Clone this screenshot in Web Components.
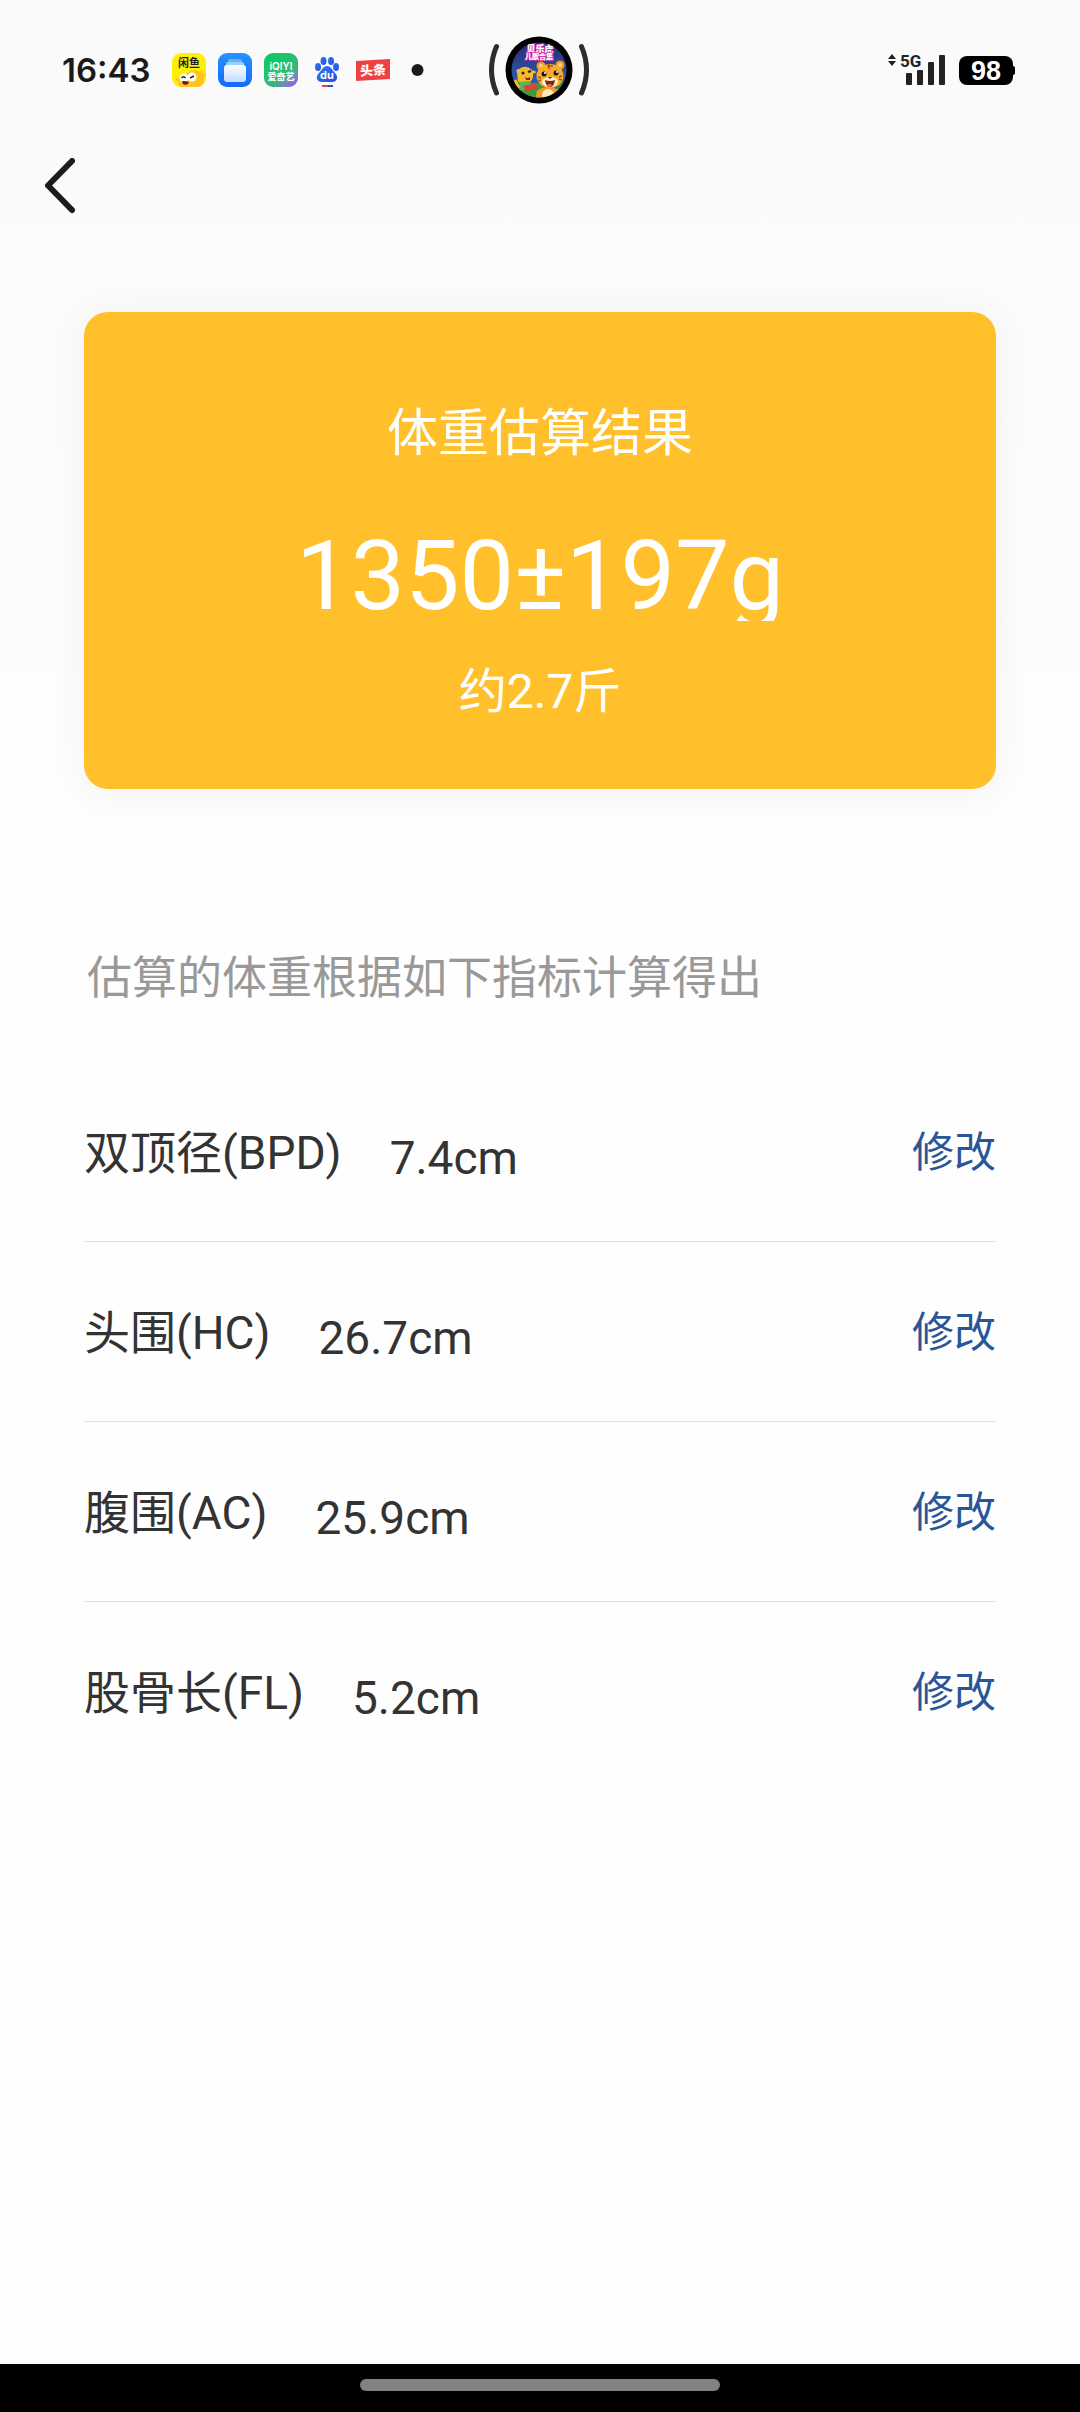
<!DOCTYPE html>
<html lang="zh-CN">
<head>
<meta charset="utf-8">
<meta name="viewport" content="width=device-width, initial-scale=1">
<title>体重估算结果</title>
<style>
  body { margin: 0; background: #fefefe; font-family: Roboto, "Noto Sans CJK SC", sans-serif; color: #333; }
</style>
</head>
<body>
<weight-page></weight-page>

<template id="t-status">
  <style>
    :host { display: grid; grid-template-columns: 1fr auto 1fr; align-items: center; height: 140px; padding: 0 64px 0 62px; color: #1a1a1a; }
    svg { display: block; flex: none; }
    .left, .right { display: flex; align-items: center; }
    .left { gap: 12px; }
    .right { justify-content: flex-end; gap: 14px; }
    time { font: 600 33px/40px Inter, sans-serif; width: 98px; }
  </style>
  <div class="left">
    <time>16:43</time>
    <svg width="34" height="34" viewBox="0 0 34 34">
      <rect width="34" height="34" rx="9" fill="#ffee0a"/>
      <path d="M8 34C4 27 7 20 14 21C18 16 28 16 32 22V27Q32 34 25 34Z" fill="#ffc51c"/>
      <path d="M29 17l2 3M32 21l2 1M4 25l2 3" stroke="#ffc51c" stroke-width="2"/>
      <circle cx="12" cy="25" r="4.500" fill="#fff"/><circle cx="20" cy="24" r="4.500" fill="#fff"/>
      <path d="M9.500 25q2-2.500 4 0M18 25l4-2" stroke="#222" stroke-width="1.500" fill="none"/>
      <path d="M10 28q5 0 7 1q-2 5-6 2z" fill="#5a1712"/><path d="M12 31q2-1 3 0l-2 1z" fill="#f0453a"/>
      <text x="17" y="14" text-anchor="middle" font-family="Noto Sans CJK SC" font-weight="700" font-size="11" fill="#222">闲鱼</text>
    </svg>
    <svg width="34" height="34" viewBox="0 0 34 34">
      <defs><linearGradient id="b" x2="0" y2="1"><stop stop-color="#2493ff"/><stop offset="1" stop-color="#1769f5"/></linearGradient>
      <linearGradient id="c" x2="0" y2="1"><stop stop-color="#fff"/><stop offset="1" stop-color="#bfdcff"/></linearGradient></defs>
      <rect width="34" height="34" rx="9" fill="url(#b)"/>
      <rect x="10" y="6" width="14" height="6" rx="2" fill="#63b1ff"/>
      <rect x="8" y="9" width="18" height="7" rx="2" fill="#9dcfff"/>
      <rect x="6" y="12" width="22" height="17" rx="3" fill="url(#c)"/>
    </svg>
    <svg width="34" height="34" viewBox="0 0 34 34">
      <defs><linearGradient id="q" x1=".2" y1="0" x2="1" y2="1"><stop stop-color="#0ccb62"/><stop offset=".6" stop-color="#35b777"/><stop offset=".8" stop-color="#7a80c8"/><stop offset="1" stop-color="#a04cf0"/></linearGradient></defs>
      <rect width="34" height="34" rx="9" fill="url(#q)"/>
      <text x="17" y="17" text-anchor="middle" font-family="Inter" font-weight="600" font-size="10" fill="#fff">iQIYI</text>
      <text x="17" y="27" text-anchor="middle" font-family="Noto Sans CJK SC" font-weight="900" font-size="9" fill="#fff">爱奇艺</text>
    </svg>
    <svg width="34" height="34" viewBox="0 0 34 34">
      <defs><linearGradient id="p" x2="1" y2="1"><stop stop-color="#2380f5"/><stop offset="1" stop-color="#3346e0"/></linearGradient></defs>
      <g fill="url(#p)"><ellipse cx="8" cy="14" rx="3" ry="4"/><ellipse cx="13.500" cy="8" rx="3" ry="4"/><ellipse cx="21" cy="8" rx="3" ry="4"/><ellipse cx="26" cy="14" rx="3" ry="4"/>
      <path d="M17 13c4 0 5 4 8 7c4 4 2 9-3 9H12c-5 0-7-5-3-9c3-3 4-7 8-7z"/></g>
      <text x="17" y="26" text-anchor="middle" font-family="Inter" font-weight="700" font-size="11" fill="#fff">du</text>
      <path d="M12 33h6" stroke="#e83b3b" stroke-width="2"/><path d="M18 33h5" stroke="#2c50e6" stroke-width="2"/>
    </svg>
    <svg width="34" height="34" viewBox="0 0 34 34">
      <path d="M0 8L34 6V26L0 28Z" fill="#f04142"/>
      <text x="17" y="22" text-anchor="middle" font-family="Noto Sans CJK SC" font-weight="900" font-size="13" fill="#fff" transform="rotate(-3 17 17)">头条</text>
    </svg>
    <svg width="34" height="34" viewBox="0 0 34 34"><circle cx="15.500" cy="17" r="6" fill="#1a1a1a"/></svg>
  </div>
  <svg width="104" height="70" viewBox="0 0 104 70">
    <defs><clipPath id="k"><circle cx="52" cy="35" r="27.500"/></clipPath>
    <linearGradient id="s" x2="0" y2="1"><stop stop-color="#2a2a70"/><stop offset="1" stop-color="#2f6ecb"/></linearGradient></defs>
    <path d="M9.500 11.500Q-.500 35 9.500 58M94.500 11.500Q104.500 35 94.500 58" fill="none" stroke="#2b2d2f" stroke-width="5" stroke-linecap="round"/>
    <circle cx="52" cy="35" r="33.500" fill="#000"/>
    <g clip-path="url(#k)">
      <rect x="24" y="7" width="56" height="56" fill="url(#s)"/>
      <path d="M22 48Q30 42 40 50Q52 44 58 54L62 66H22Z" fill="#3b9c3c"/>
      <path d="M72 48l10-2v18H66z" fill="#2e8c41"/>
      <path d="M30 38q-2-4 2-4q7-5 13 1q3 8-2 12q-8 4-12-1z" fill="#f7b92c"/>
      <path d="M33 47l10-1 4 9H32z" fill="#59b84e"/><path d="M36 51l13-3 2 5-12 4z" fill="#d8463c"/>
      <path d="M28 45l4 8M44 38q3-2 4 0" stroke="#f7b92c" stroke-width="3"/>
      <circle cx="36" cy="38" r="1.500" fill="#222"/><path d="M41 37l3-1" stroke="#222" stroke-width="2"/><path d="M38 42q3 2 5 0v3h-4z" fill="#8c2619"/>
      <circle cx="54" cy="31" r="4.500" fill="#f59a23"/><circle cx="73" cy="30" r="4.500" fill="#f59a23"/><circle cx="54" cy="31" r="2" fill="#ffd98a"/><circle cx="73" cy="30" r="2" fill="#ffd98a"/>
      <path d="M50 56q10-8 24 0l2 10H48z" fill="#f39a26"/><ellipse cx="61" cy="60" rx="6" ry="6" fill="#ffedb5"/>
      <ellipse cx="63" cy="41" rx="13.500" ry="12" fill="#fbab2b"/>
      <path d="M60 31h6M62 29v5M51 42l3 1M51 46l3-1M75 41l-3 1M75 45l-3-1" stroke="#a6521b" stroke-width="1.500"/>
      <ellipse cx="63" cy="47" rx="8" ry="5" fill="#fff0c4"/>
      <circle cx="57" cy="39" r="2.500" fill="#1d1512"/><circle cx="69" cy="38" r="2.500" fill="#1d1512"/><circle cx="58" cy="38" r="1" fill="#fff"/><circle cx="70" cy="37" r="1" fill="#fff"/>
      <path d="M61 42h4l-2 2z" fill="#4a2115"/><path d="M58 45q5 2 10 0q-1 7-5 7t-5-7z" fill="#7c2418"/><path d="M60 50q3-2 5 0l-2 2z" fill="#ed6a61"/>
      <g text-anchor="middle" font-family="Noto Sans CJK SC" font-weight="900" fill="#fff" stroke="#d536ae" stroke-width="1.500" paint-order="stroke">
        <text x="53" y="17" font-size="9">贝乐虎</text><text x="52" y="24" font-size="7">儿歌合集</text>
      </g>
    </g>
  </svg>
  <div class="right">
    <svg width="60" height="44" viewBox="0 -6 60 44" fill="#222">
      <path d="M7 0l4 5H3zM7 12l4-5H3z"/>
      <text x="15" y="13" font-family="Roboto" font-weight="700" font-size="17">5G</text>
      <rect x="21" y="19" width="6" height="12" rx="1"/><rect x="32" y="16" width="6" height="15" rx="1"/><rect x="43" y="8" width="6" height="23" rx="1"/><rect x="54" y="1" width="6" height="30" rx="1"/>
    </svg>
    <svg width="57" height="30" viewBox="0 0 57 30">
      <rect y="1" width="54" height="29" rx="8" fill="#000"/><rect x="50" y="11" width="6" height="9" rx="2" fill="#000"/>
      <text x="27" y="25" text-anchor="middle" font-family="Liberation Sans" font-weight="700" font-size="27" fill="#fff">98</text>
    </svg>
  </div>
</template>

<template id="t-nav">
  <style>
    :host { display: flex; align-items: center; height: 92px; padding: 0 36px; }
    button { display: flex; padding: 8px; border: 0; background: none; }
  </style>
  <button type="button" aria-label="返回">
    <svg width="34" height="56" viewBox="0 0 34 56" fill="none" stroke="#1c1c1c" stroke-width="6" stroke-linecap="round" stroke-linejoin="round"><path d="M28 3L4 27.500L28 52"/></svg>
  </button>
</template>

<template id="t-card">
  <style>
    :host { display: flex; flex-direction: column; align-items: center; padding: 92px 24px 67px; border-radius: 24px; background: #ffc02b; color: #fff; box-shadow: 0 4px 40px rgba(0,0,0,.05); }
    h1 { margin: 0; font-weight: 400; font-size: 51px; line-height: 60px; }
    .value { margin-top: 67px; font-size: 97px; line-height: 90px; overflow: hidden; }
    .note { margin-top: 41px; font-size: 48px; line-height: 60px; }
  </style>
  <h1><slot name="title"></slot></h1>
  <div class="value"><slot name="value"></slot></div>
  <div class="note"><slot name="note"></slot></div>
</template>

<template id="t-row">
  <style>
    :host { display: flex; align-items: center; min-height: 176px; padding-top: 3px; border-bottom: 1px solid #e2e2e2; font-size: 46px; line-height: 60px; }
    :host(:last-of-type) { border-bottom-color: transparent; }
    .value { padding: 10px 0 0 48px; }
    a { margin-left: auto; color: #2a5596; font-size: 42px; text-decoration: none; }
  </style>
  <span><slot name="label"></slot></span>
  <span class="value"><slot></slot></span>
  <a href="#">修改</a>
</template>

<template id="t-home">
  <style>
    :host { display: flex; justify-content: center; padding: 15px 0 21px; background: #000; }
    i { width: 360px; height: 12px; border-radius: 6px; background: #828282; }
  </style>
  <i></i>
</template>

<template id="t-page">
  <style>
    :host { display: flex; flex-direction: column; min-height: 100vh; background: linear-gradient(#fafafa, #fefefe 900px); }
    main { flex: 1; padding: 80px 84px 0; }
    p { margin: 160px 0 53px; padding-left: 3px; color: #999; font-size: 45px; line-height: 60px; }
  </style>
  <status-bar></status-bar>
  <nav-header></nav-header>
  <main>
    <result-card>
      <span slot="title">体重估算结果</span>
      <span slot="value">1350±197g</span>
      <span slot="note">约2.7斤</span>
    </result-card>
    <p>估算的体重根据如下指标计算得出</p>
    <section>
      <metric-row><span slot="label">双顶径(BPD)</span>7.4cm</metric-row>
      <metric-row><span slot="label">头围(HC)</span>26.7cm</metric-row>
      <metric-row><span slot="label">腹围(AC)</span>25.9cm</metric-row>
      <metric-row><span slot="label">股骨长(FL)</span>5.2cm</metric-row>
    </section>
  </main>
  <home-indicator></home-indicator>
</template>

<script>
  class TemplateElement extends HTMLElement {
    constructor() {
      super();
      const template = document.getElementById(this.constructor.template);
      this.attachShadow({ mode: "open" }).append(template.content.cloneNode(true));
    }
  }
  customElements.define("status-bar", class extends TemplateElement { static template = "t-status"; });
  customElements.define("nav-header", class extends TemplateElement { static template = "t-nav"; });
  customElements.define("result-card", class extends TemplateElement { static template = "t-card"; });
  customElements.define("metric-row", class extends TemplateElement { static template = "t-row"; });
  customElements.define("home-indicator", class extends TemplateElement { static template = "t-home"; });
  customElements.define("weight-page", class extends TemplateElement { static template = "t-page"; });
</script>
</body>
</html>
